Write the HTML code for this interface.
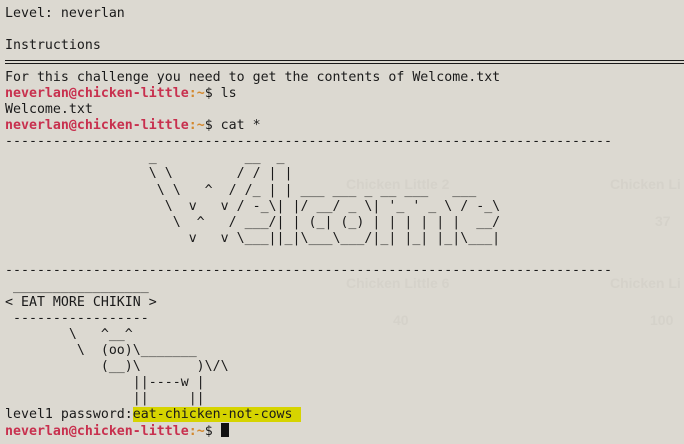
<!DOCTYPE html>
<html><head><meta charset="utf-8"><style>
html,body{margin:0;padding:0;background:#dcd9d1;width:684px;height:444px;overflow:hidden}
pre{position:absolute;left:5px;top:6px;margin:0;font-family:"DejaVu Sans Mono","Liberation Mono",monospace;font-size:13.28px;line-height:16.05px;color:#1a1a1a;white-space:pre}
.u{color:#c8304e;font-weight:bold}.t{color:#d4892e;font-weight:bold}
.hl{background:#d6d400}
.cur{background:#111;display:inline-block;width:8px;height:14px;vertical-align:-2px}
.rule{position:absolute;left:5px;right:0;height:1px;background:#1a1a1a}
.wm{position:absolute;font-family:"Liberation Sans",sans-serif;font-weight:bold;color:#d5d2ca;font-size:14px}
</style></head><body>
<div class="wm" style="left:346px;top:176px">Chicken Little 2</div>
<div class="wm" style="left:610px;top:176px">Chicken Li</div>
<div class="wm" style="left:346px;top:275px">Chicken Little 6</div>
<div class="wm" style="left:610px;top:275px">Chicken Li</div>
<div class="wm" style="left:393px;top:312px">40</div>
<div class="wm" style="left:650px;top:312px">100</div>
<div class="wm" style="left:655px;top:213px">37</div>
<div class="rule" style="top:60px"></div>
<div class="rule" style="top:63px"></div>
<pre>Level: neverlan

Instructions

For this challenge you need to get the contents of Welcome.txt
<span class="u">neverlan@chicken-little</span><span class="t">:~</span>$ ls
Welcome.txt
<span class="u">neverlan@chicken-little</span><span class="t">:~</span>$ cat *
----------------------------------------------------------------------------
                  _           __  _
                  \ \        / / | |
                   \ \   ^  / /_ | | ___ ___ _ __ ___   ___
                    \  v   v / -_\| |/ __/ _ \| '_ ' _ \ / -_\
                     \  ^   / ___/| | (_| (_) | | | | | |  __/
                       v   v \___||_|\___\___/|_| |_| |_|\___|

----------------------------------------------------------------------------
 _________________
&lt; EAT MORE CHIKIN &gt;
 -----------------
        \   ^__^
         \  (oo)\_______
            (__)\       )\/\
                ||----w |
                ||     ||
level1 password:<span class="hl">eat-chicken-not-cows </span>
<span class="u">neverlan@chicken-little</span><span class="t">:~</span>$ <span class="cur"></span></pre>
</body></html>
